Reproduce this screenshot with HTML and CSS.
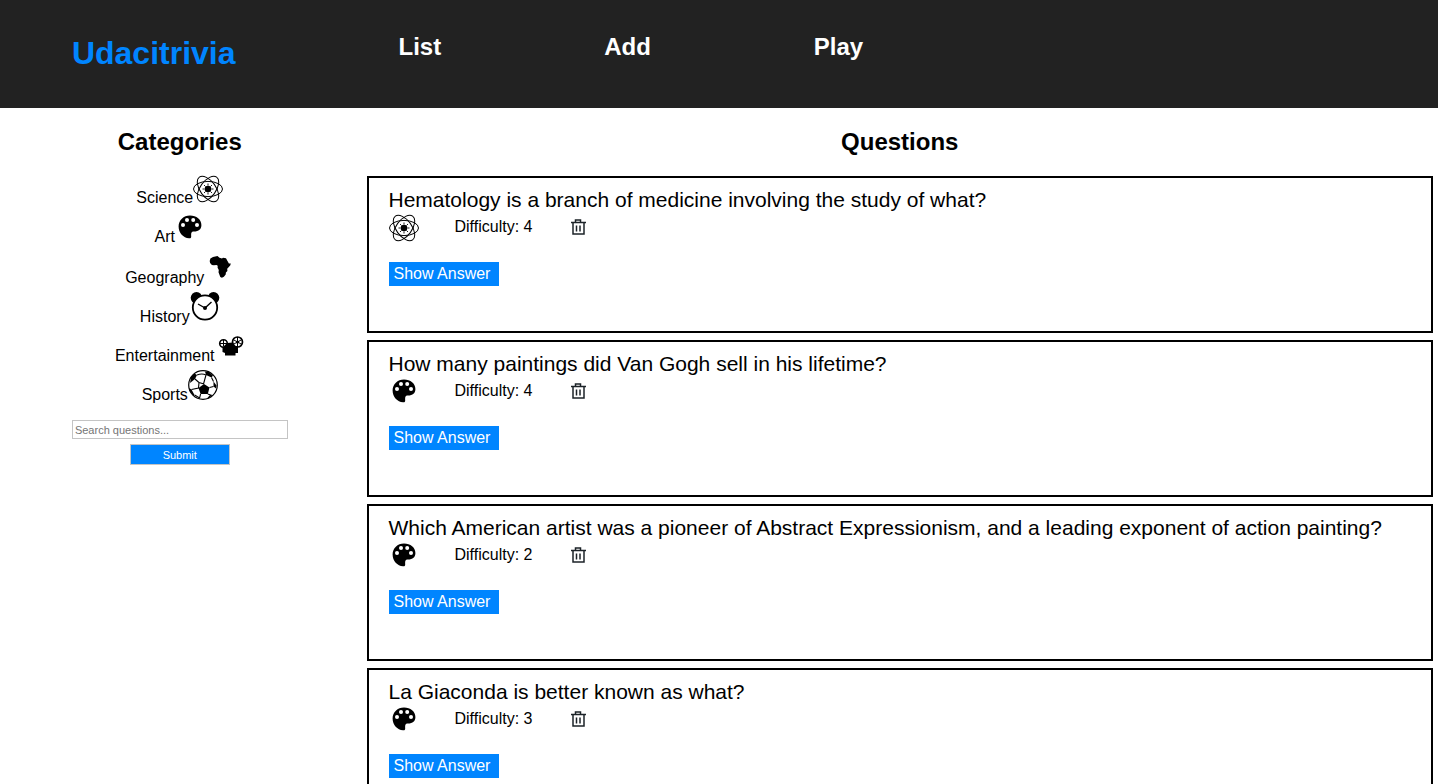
FILE: index.html
```html
<!DOCTYPE html>
<html lang="en">
<head>
<meta charset="utf-8">
<title>Udacitrivia</title>
<link rel="stylesheet" href="styles.css">
</head>
<body>
<svg class="sprite" aria-hidden="true">
  <symbol id="science" viewBox="0 0 30 30">
    <g fill="none" stroke="#000">
      <ellipse cx="15" cy="16" rx="14.500" ry="7.600"/>
      <ellipse cx="15" cy="16" rx="14.700" ry="7.800" transform="rotate(54 15 16)"/>
      <ellipse cx="15" cy="16" rx="14.700" ry="7.800" transform="rotate(126 15 16)"/>
      <path stroke-width=".9" d="M15 10.500v2M15 19.500v2M9.500 16h2M18.500 16h2M11 12l1.500 1.500M17.500 18.500l1.500 1.500M19 12L17.500 13.500M12.500 18.500L11 20"/>
    </g>
    <circle cx="15" cy="16" r="3.300"/>
  </symbol>
  <symbol id="art" viewBox="0 0 30 30">
    <path d="M15 3.500C8.500 3.500 3.600 8.300 3.600 14.500c0 6.500 4.800 11.300 10.400 11.800 1.400.1 2.200-.3 2.200-1.800 0-3.500-.2-4.800 2.800-4.900 4.800-.2 7.400-2.400 7.400-6.600C26.400 7.500 21.500 3.500 15 3.500z"/>
    <g fill="#fff"><circle cx="8" cy="13" r="2"/><circle cx="12" cy="8" r="2"/><circle cx="18.200" cy="8" r="2"/><circle cx="22" cy="13" r="2"/></g>
  </symbol>
  <symbol id="geography" viewBox="0 0 30 32">
    <path d="M9 6l4.500-1 2 1.700 2.500.7 1-.6 3 .4 1.500 2.800 1.400 2.600 1.900-.2-.6 2-3 3.300.2 2.400-1.500 1.500-.2 2-1.800 2.200-2 .9-1.600-.8-1.800-4.700.3-2.100-1.200-2.400.1-1.900-1.200-.7-2.700.2-1.900-.3-1.800-2-.4-2.100.7-2.400z"/>
  </symbol>
  <symbol id="history" viewBox="0 0 30 30">
    <circle cx="6.500" cy="5.800" r="5.800"/><circle cx="23.500" cy="5.800" r="5.800"/>
    <circle cx="15" cy="15.500" r="12.200" fill="#fff" stroke="#000" stroke-width="1.800"/>
    <path d="M15 16l6.500-6M15 16L8 12" stroke="#000" stroke-width="1.400"/>
    <circle cx="15" cy="16" r="2"/>
  </symbol>
  <symbol id="entertainment" viewBox="0 0 30 30">
    <circle cx="8.500" cy="12.500" r="3.800" fill="#fff" stroke="#000" stroke-width="1.600"/>
    <circle cx="22.500" cy="11" r="5" fill="#fff" stroke="#000" stroke-width="1.700"/>
    <path d="M5 12.500h7M8.500 9v6M22.500 6v10M18 8.500l9 5M27 8.500l-9 5" stroke="#000"/>
    <circle cx="22.500" cy="11" r="1.600"/>
    <path d="M9 15l3-3 6-.5 2 3.500h3v7h-2.500v2.500H10v-2.500l-2.500-1V16z"/>
  </symbol>
  <symbol id="sports" viewBox="0 0 30 30">
    <circle cx="15" cy="15" r="14.300" fill="#fff" stroke="#000" stroke-width="1.200"/>
    <path d="M16 14l5.500 3.500-1.700 6.500h-7.200L10.500 18zM17 1.500l4 .5 4 3.500-1.500 2-5.500-2.500zM3 7l3.500-3.500L9 5l-2 4-5 4zM25.500 11.500l3 4-.5 3-2.500-2zM1 18l2.500 1.500L6.500 25l-1 1L2 21zM24.500 25l-4 3.500-1-.7 3-3.300z"/>
    <path d="M9 5q5-2 9 0l-2.500 9M7 9l4 3.500-.5 5.500-7 1.500M11 12.500l5 1.500M23.500 7.500l2 4M21.500 17.500l4-1M12.600 24l-1 4-5-3M19.800 24l2.700 1" fill="none" stroke="#000" stroke-width="1.100"/>
  </symbol>
  <symbol id="trash" viewBox="0 0 16 16">
    <path d="M1 3.500h15M5.500 3V1h5v2M3 4v11h11V4M6.500 6.500v6M10 6.500v6" fill="none" stroke="#1c2328" stroke-width="1.500"/>
  </symbol>
</svg>

<header class="header">
  <h1 class="brand">Udacitrivia</h1>
  <nav class="nav">
    <a class="nav-link" href="#list">List</a>
    <a class="nav-link" href="#add">Add</a>
    <a class="nav-link" href="#play">Play</a>
  </nav>
</header>

<main class="layout">
  <aside class="sidebar">
    <h2 class="heading">Categories</h2>
    <ul class="categories">
      <li class="category">Science<svg class="icon"><use href="#science"/></svg></li>
      <li class="category">Art<svg class="icon"><use href="#art"/></svg></li>
      <li class="category">Geography<svg class="icon icon-tall"><use href="#geography"/></svg></li>
      <li class="category">History<svg class="icon"><use href="#history"/></svg></li>
      <li class="category">Entertainment<svg class="icon"><use href="#entertainment"/></svg></li>
      <li class="category">Sports<svg class="icon"><use href="#sports"/></svg></li>
    </ul>
    <form class="search">
      <input class="search-input" type="text" placeholder="Search questions..." aria-label="Search questions">
      <button class="search-submit" type="submit">Submit</button>
    </form>
  </aside>

  <section class="questions">
    <h2 class="heading">Questions</h2>
    <div class="cards">
      <article class="card">
        <div class="question">Hematology is a branch of medicine involving the study of what?</div>
        <div class="details">
          <svg class="icon"><use href="#science"/></svg>
          <span>Difficulty: 4</span>
          <button class="delete" aria-label="Delete question"><svg class="trash"><use href="#trash"/></svg></button>
        </div>
        <button class="show-answer">Show Answer</button>
      </article>
      <article class="card">
        <div class="question">How many paintings did Van Gogh sell in his lifetime?</div>
        <div class="details">
          <svg class="icon"><use href="#art"/></svg>
          <span>Difficulty: 4</span>
          <button class="delete" aria-label="Delete question"><svg class="trash"><use href="#trash"/></svg></button>
        </div>
        <button class="show-answer">Show Answer</button>
      </article>
      <article class="card">
        <div class="question">Which American artist was a pioneer of Abstract Expressionism, and a leading exponent of action painting?</div>
        <div class="details">
          <svg class="icon"><use href="#art"/></svg>
          <span>Difficulty: 2</span>
          <button class="delete" aria-label="Delete question"><svg class="trash"><use href="#trash"/></svg></button>
        </div>
        <button class="show-answer">Show Answer</button>
      </article>
      <article class="card">
        <div class="question">La Giaconda is better known as what?</div>
        <div class="details">
          <svg class="icon"><use href="#art"/></svg>
          <span>Difficulty: 3</span>
          <button class="delete" aria-label="Delete question"><svg class="trash"><use href="#trash"/></svg></button>
        </div>
        <button class="show-answer">Show Answer</button>
      </article>
    </div>
  </section>
</main>
</body>
</html>
```
FILE: styles.css
```css
* { box-sizing: border-box; }
html { scrollbar-width: none; }
body {
  margin: 0;
  background: #fff;
  color: #000;
  font: 16px/18px "Liberation Sans", Arial, sans-serif;
}
button, input { font-family: inherit; }
.sprite { display: none; }

.header {
  display: flex;
  align-items: flex-start;
  gap: 163px;
  padding: 33px 5% 37px;
  background: #222;
}
.brand {
  margin: 0;
  padding-top: 2px;
  color: #0085ff;
  font-size: 32px;
  line-height: 36px;
}
.nav { display: flex; gap: 163px; }
.nav-link {
  color: #fff;
  font-size: 24px;
  font-weight: bold;
  line-height: 28px;
  text-decoration: none;
}

.layout { display: grid; grid-template-columns: 1fr 3fr; }
.heading {
  margin: 0;
  padding: 20px 0 17px;
  font-size: 24px;
  line-height: 28px;
  text-align: center;
}
.sidebar { padding: 0 5vw; }
.categories {
  margin: 0 0 16px;
  padding: 0;
  list-style: none;
  text-align: center;
}
.category {
  margin-bottom: 5px;
  white-space: nowrap;
}
.icon { width: 30px; height: 30px; }
.icon-tall { height: 32px; }

.search { display: flex; flex-direction: column; align-items: center; gap: 5px; }
.search-input {
  width: 100%;
  height: 19px;
  padding: 1px 2px;
  border: 1px solid #c4c4c4;
  font-size: 11px;
}
.search-input::placeholder { color: #757575; }
.search-submit {
  width: 100px;
  height: 21px;
  padding: 0;
  border: 1px solid #c4c4c4;
  background: #0085ff;
  color: #fff;
  font-size: 11px;
}

.questions { padding: 0 5px 0 7px; }
.cards { padding-top: 3px; }
.card {
  margin-bottom: 7px;
  padding: 10px 20px 45px;
  border: 2px solid #000;
}
.question { font-size: 21px; line-height: 24px; }
.details { display: flex; align-items: center; gap: 36px; height: 30px; }
.delete {
  display: flex;
  padding: 0 2px;
  border: 0;
  background: none;
}
.trash { width: 16px; height: 16px; }
.show-answer {
  display: block;
  width: 110px;
  height: 24px;
  margin-top: 20px;
  padding: 0 5px;
  border: 0;
  background: #0085ff;
  color: #fff;
  font-size: 16px;
  text-align: left;
}
```
